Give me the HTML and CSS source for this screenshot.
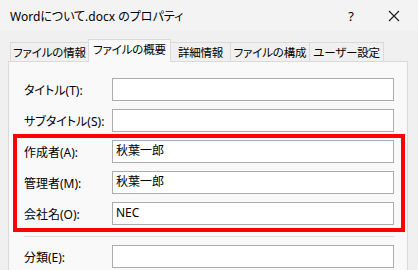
FILE: index.html
```html
<!DOCTYPE html>
<html lang="ja">
	<head>
		<meta charset="utf-8">
		<title>Wordについて.docx のプロパティ</title>
		<link rel="stylesheet" href="styles.css">
	</head>
	<body>
		<div class="window">
			<div class="titlebar">
				<span class="title">Wordについて.docx のプロパティ</span>
				<span class="help">?</span>
				<span class="close">
					<svg width="12" height="12" viewBox="0 0 12 12">
						<path d="M1 1 L11 11 M11 1 L1 11" stroke="#1a1a1a" stroke-width="1.1" fill="none"/>
					</svg>
				</span>
			</div>

			<div class="tabs">
				<div class="tab tab_info">ファイルの情報</div>
				<div class="tab tab_summary selected">ファイルの概要</div>
				<div class="tab tab_detail">詳細情報</div>
				<div class="tab tab_content">ファイルの構成</div>
				<div class="tab tab_custom">ユーザー設定</div>
			</div>

			<div class="panel">
				<div class="form">
					<div class="row">
						<label>タイトル(T):</label>
						<div class="field"></div>
					</div>
					<div class="row">
						<label>サブタイトル(S):</label>
						<div class="field"></div>
					</div>

					<!-- highlighted group -->
					<div class="group">
						<div class="row">
							<label>作成者(A):</label>
							<div class="field">秋葉一郎</div>
						</div>
						<div class="row">
							<label>管理者(M):</label>
							<div class="field">秋葉一郎</div>
						</div>
						<div class="row">
							<label>会社名(O):</label>
							<div class="field">NEC</div>
						</div>
						<span class="highlight"></span>
					</div>

					<div class="separator"></div>

					<div class="row">
						<label>分類(E):</label>
						<div class="field"></div>
					</div>
				</div>
			</div>
		</div>
	</body>
</html>
```

FILE: styles.css
```css
*{
	margin:0;
	padding:0;
	box-sizing:border-box;
}

body{
	font-family:"Noto Sans", "Noto Sans CJK JP", sans-serif;
	font-feature-settings:"palt";
	font-size:12px;
	color:#000;
	background-color:#f0f0f0;
	width:418px;
	height:270px;
	overflow:hidden;
}

.window{
	width:418px;
	height:270px;
}

.titlebar{
	display:flex;
	align-items:center;
	height:31px;
	padding-left:10px;
	background-color:#f3f3f3;
}

.title{
	flex:1;
	font-size:12px;
}

.help{
	width:14px;
	margin-right:30px;
	text-align:center;
	font-size:13px;
}

.close{
	display:flex;
	width:12px;
	margin-right:18px;
}

.tabs{
	display:flex;
	align-items:flex-end;
	height:30px;
	padding-left:10px;
	position:relative;
	z-index:1;
}

.tab{
	height:19px;
	border:1px solid #dadada;
	border-bottom:none;
	border-right:none;
	background-color:#f0f0f0;
	display:flex;
	align-items:center;
	justify-content:center;
	white-space:nowrap;
	font-size:11.5px;
	letter-spacing:-0.2px;
	padding-bottom:1px;
}

.tab_info{ width:78px; }
.tab_summary{ width:83px; }
.tab_detail{ width:59px; }
.tab_content{ width:79px; }
.tab_custom{ width:75px; border-right:1px solid #dadada; }

.tab.selected{
	height:23px;
	margin-bottom:-1px;
	background-color:#f9f9f9;
	border-right:1px solid #dadada;
	padding-bottom:4px;
}

.tab.selected + .tab{
	border-left:none;
}

.panel{
	margin:0 10px 0 8px;
	height:220px;
	background-color:#f9f9f9;
	border:1px solid #dadada;
	padding:16px 13px 0 15px;
}

.form{
	display:flex;
	flex-direction:column;
	gap:8px;
}

.group{
	display:flex;
	flex-direction:column;
	gap:8px;
	position:relative;
}

.row{
	display:flex;
	align-items:center;
	height:23px;
}

.row label{
	width:88px;
	white-space:nowrap;
}

.field{
	flex:1;
	height:23px;
	background-color:#fff;
	border:1px solid #ababb0;
	padding-left:3px;
	line-height:20px;
}

.highlight{
	position:absolute;
	top:-6px;
	left:-11px;
	right:-11px;
	bottom:-7px;
	border:4px solid #ff0000;
}

.separator{
	height:1px;
	margin-top:3px;
	background-color:#dcdcdc;
}
```
